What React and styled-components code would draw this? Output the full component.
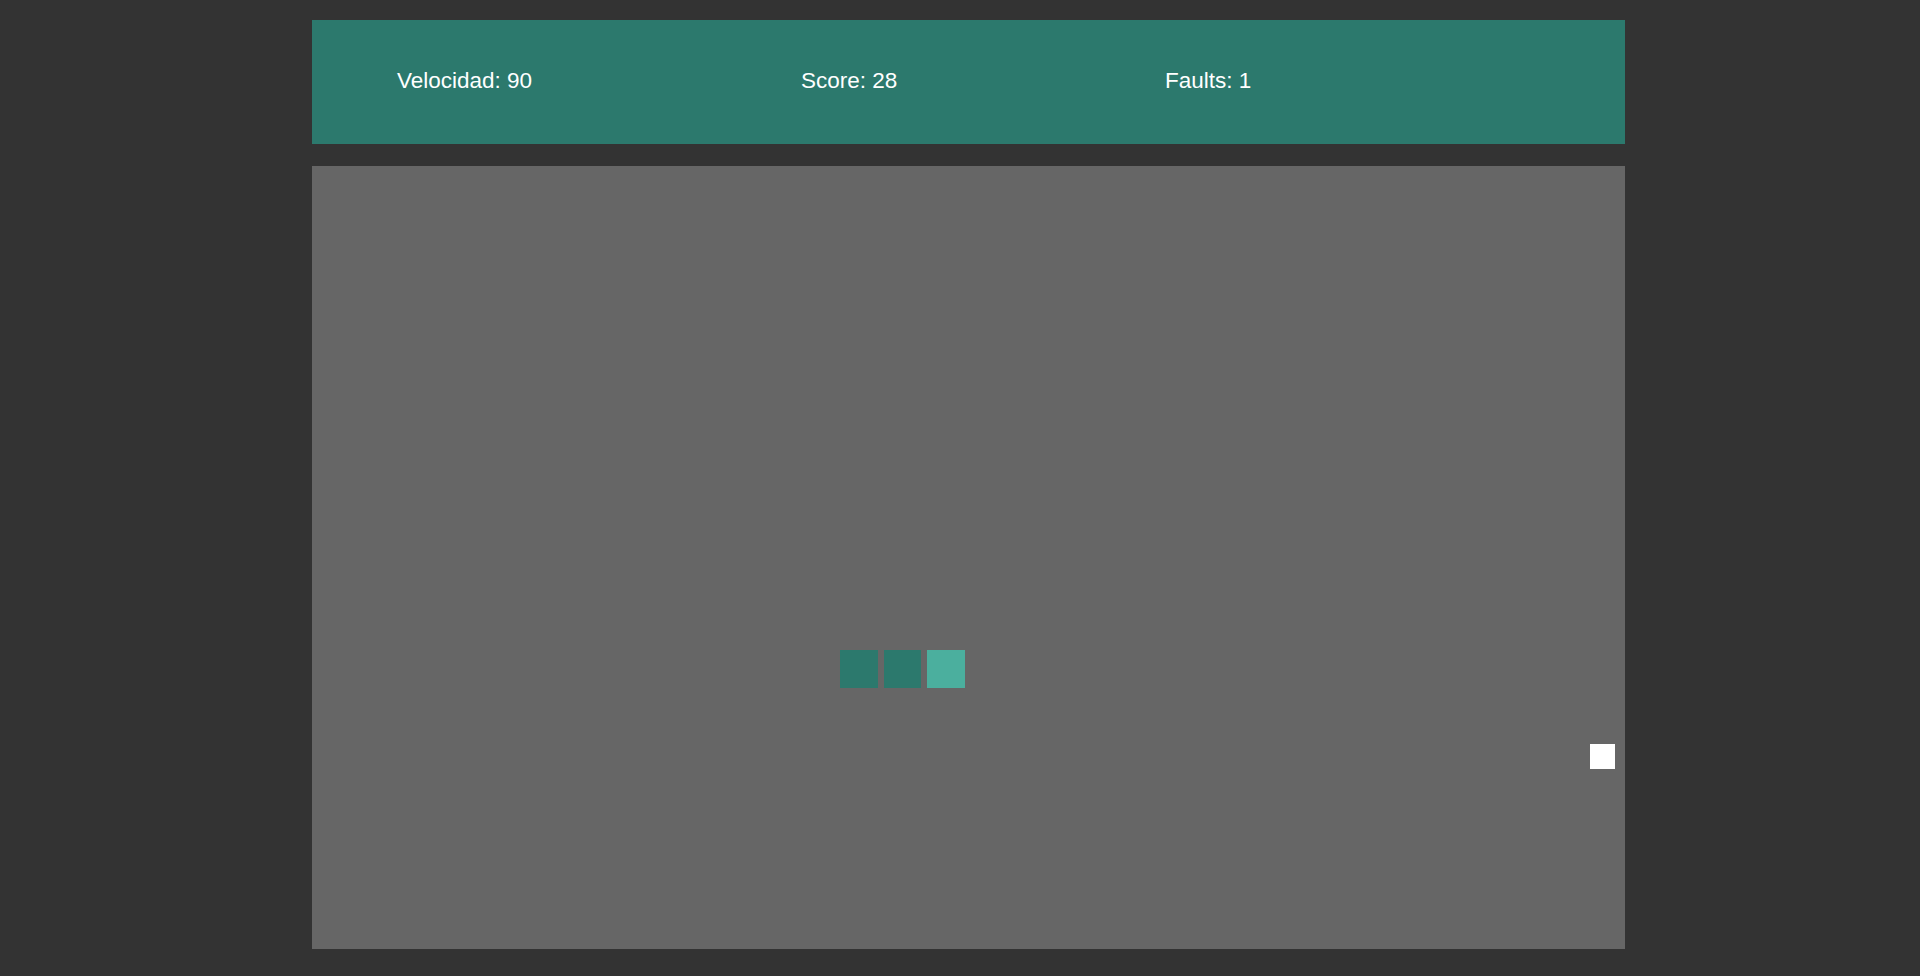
import React from "react";
import styled, { createGlobalStyle } from "styled-components";

const Global = createGlobalStyle`
  html, body { margin: 0; padding: 0; background: #333333; }
  body { font-family: "Liberation Sans", Arial, sans-serif; }
`;

const Page = styled.div`
  padding: 20px 0 0 312px;
  display: flex;
  flex-direction: column;
  gap: 22px;
  width: 1313px;
`;

const Header = styled.header`
  height: 124px;
  box-sizing: border-box;
  background: #2c796d;
  padding: 48px 0 0 85px;
  display: grid;
  grid-template-columns: 404px 364px auto;
  align-items: start;
`;

const Stat = styled.span`
  color: #ffffff;
  font-size: 22.5px;
  line-height: 25px;
`;

const Board = styled.div`
  position: relative;
  height: 783px;
  background: #666666;
`;

const Cell = styled.div`
  position: absolute;
  top: ${(p) => p.$y}px;
  left: ${(p) => p.$x}px;
  width: ${(p) => p.$size}px;
  height: ${(p) => p.$size}px;
  background: ${(p) => (p.$head ? "#4baf9e" : "#2c796d")};
`;

const Food = styled.div`
  position: absolute;
  top: 578px;
  left: 1278px;
  width: 25px;
  height: 25px;
  background: #ffffff;
`;

const snake = [
  { x: 528, head: false },
  { x: 571.5, head: false },
  { x: 615, head: true },
];

export default function App() {
  return (
    <>
      <Global />
      <Page>
        <Header>
          <Stat>Velocidad: 90</Stat>
          <Stat>Score: 28</Stat>
          <Stat>Faults: 1</Stat>
        </Header>
        <Board>
          {snake.map((s, i) => (
            <Cell key={i} $x={s.x} $y={484} $size={37.5} $head={s.head} />
          ))}
          <Food />
        </Board>
      </Page>
    </>
  );
}
